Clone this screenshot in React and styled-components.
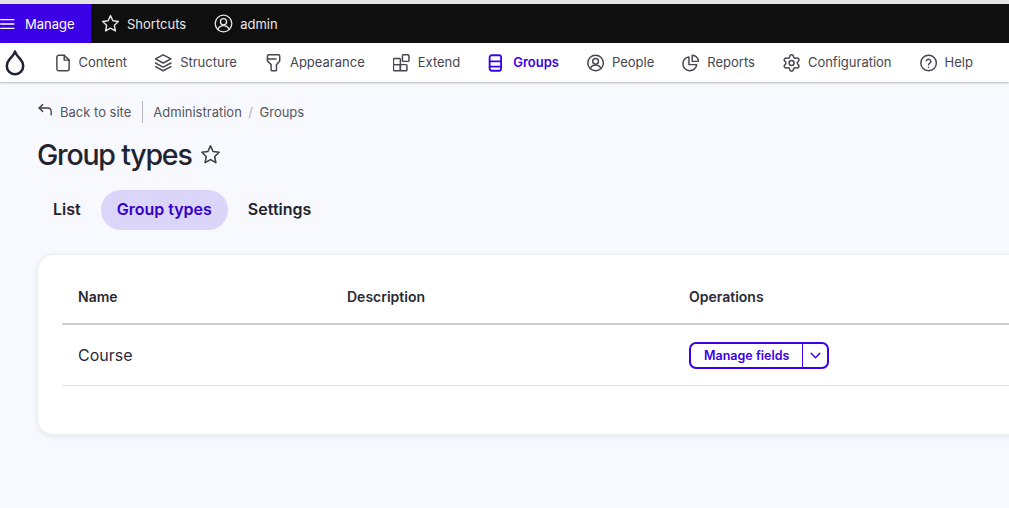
import React from 'react';
import styled, { createGlobalStyle } from 'styled-components';

const GlobalStyle = createGlobalStyle`
	html, body {
		margin: 0;
		height: 100%;
		overflow: hidden;
		background: #f8f9fe;
		font-family: Inter, "Liberation Sans", sans-serif;
		color: #222330;
	}
	#root {
		min-height: 100%;
	}
`;

const Icon = ({ size = 18, color = 'currentColor', width = 1.5, box = '0 0 24 24', children }) => (
	<svg
		width={size}
		height={size}
		viewBox={box}
		fill="none"
		stroke={color}
		strokeWidth={width}
		strokeLinecap="round"
		strokeLinejoin="round"
		style={{ flexShrink: 0 }}
	>
		{children}
	</svg>
);

const StarPath = () => (
	<path d="M12 3l2.7 5.9 6.3.8-4.600 4.400 1.200 6.400L12 17.400l-5.600 3.100 1.200-6.400L3 9.700l6.300-.8z" />
);

const navItems = [
	{
		label: 'Content',
		icon: (
			<>
				<path d="M5 5a2.500 2.500 0 0 1 2.500-2.500H14l6 6V19a2.500 2.500 0 0 1-2.500 2.500h-10A2.500 2.500 0 0 1 5 19z" />
				<path d="M14 2.500V8.500h6" />
			</>
		),
	},
	{
		label: 'Structure',
		icon: (
			<>
				<path d="M11.500 2l9.500 5-9.500 5L2 7z" />
				<path d="M2 12l9.500 5 9.500-5" />
				<path d="M2 16.500l9.500 5 9.500-5" />
			</>
		),
	},
	{
		label: 'Appearance',
		icon: (
			<>
				<path d="M4.500 3.500a1.500 1.500 0 0 1 1.500-1.500h12a1.500 1.500 0 0 1 1.500 1.500v6l-4 4.500v6.500a1 1 0 0 1-1 1h-4.500a1 1 0 0 1-1-1V14l-4.500-4.500z" />
				<path d="M4.500 7h10.500" />
			</>
		),
	},
	{
		label: 'Extend',
		icon: (
			<>
				<rect x="2" y="6.500" width="8.500" height="7.500" rx="1" />
				<rect x="2" y="14" width="8.500" height="7.500" rx="1" />
				<rect x="10.500" y="14" width="8" height="7.500" rx="1" />
				<rect x="13" y="2" width="8" height="8" rx="1" />
			</>
		),
	},
	{
		label: 'Groups',
		active: true,
		stroke: 2.2,
		icon: (
			<>
				<rect x="3.500" y="2.500" width="14" height="19" rx="2.500" />
				<path d="M3.500 10h14" />
				<path d="M3.500 16.500h14" />
			</>
		),
	},
	{
		label: 'People',
		icon: (
			<>
				<circle cx="12" cy="12" r="9.500" />
				<circle cx="12" cy="10" r="3.500" />
				<path d="M5.500 19c1.200-3 3.600-4.500 6.500-4.500s5.300 1.500 6.500 4.500" />
			</>
		),
	},
	{
		label: 'Reports',
		icon: (
			<>
				<path d="M10 4.500a8.500 8.500 0 1 0 9.500 9.500H10z" />
				<path d="M14 2.500a7.500 7.500 0 0 1 7.500 7.500H14z" />
			</>
		),
	},
	{
		label: 'Configuration',
		icon: (
			<>
				<circle cx="12" cy="12" r="3" />
				<path d="M9.671 4.136a2.34 2.34 0 0 1 4.659 0 2.34 2.34 0 0 0 3.319 1.915 2.34 2.34 0 0 1 2.33 4.033 2.34 2.34 0 0 0 0 3.831 2.34 2.34 0 0 1-2.33 4.033 2.34 2.34 0 0 0-3.319 1.915 2.34 2.34 0 0 1-4.659 0 2.34 2.34 0 0 0-3.32-1.915 2.34 2.34 0 0 1-2.33-4.033 2.34 2.34 0 0 0 0-3.831A2.34 2.34 0 0 1 6.35 6.051a2.34 2.34 0 0 0 3.32-1.915" />
			</>
		),
	},
	{
		label: 'Help',
		icon: (
			<>
				<circle cx="12" cy="12" r="9.500" />
				<path d="M9.200 9.300a2.900 2.900 0 0 1 5.600.8c0 1.900-2.800 2.400-2.800 4" />
				<path d="M12 17.200v.1" />
			</>
		),
	},
];

const App = () => (
	<>
		<GlobalStyle />
		<TopStrip />
		<Toolbar>
			<ManageTab>
				<Icon size={16} color="#fff" width={2}>
					<path d="M1 5.500h20M1 12h20M1 18.500h20" />
				</Icon>
				Manage
			</ManageTab>
			<DarkTab>
				<Icon size={21} width={1.6}>
					<StarPath />
				</Icon>
				Shortcuts
			</DarkTab>
			<DarkTab>
				<Icon size={21} width={1.5}>
					<circle cx="12" cy="12" r="9.500" />
					<circle cx="12" cy="10" r="3.500" />
					<path d="M5.500 19c1.200-3 3.600-4.500 6.500-4.500s5.300 1.500 6.500 4.500" />
				</Icon>
				admin
			</DarkTab>
		</Toolbar>
		<NavBar>
			<LogoSlot>
				<svg width="20" height="26" viewBox="0 0 20 26" fill="none">
					<path
						d="M10 1.500c1 3.500 3.300 5.500 5.300 7.700 1.800 2 2.900 4.200 2.900 6.800a8.200 8.200 0 0 1-16.400 0c0-2.600 1.100-4.800 2.900-6.800C6.700 7 9 5 10 1.500z"
						stroke="#1f2230"
						strokeWidth="2.500"
						strokeLinejoin="round"
					/>
				</svg>
			</LogoSlot>
			{navItems.map((item) => (
				<NavItem key={item.label} $active={item.active}>
					<Icon size={18} box="1.500 1 22 22" width={item.stroke || 1.8}>
						{item.icon}
					</Icon>
					<NavLabel>{item.label}</NavLabel>
				</NavItem>
			))}
		</NavBar>
		<Main>
			<Breadcrumbs>
				<BackLink>
					<BackIcon>
						<Icon size={17} width={1.9} color="#3c3d47">
							<path d="M8 3.500L3 8.500l5 5" />
							<path d="M3 8.500h12.500a4.500 4.500 0 0 1 4.500 4.500v5" />
						</Icon>
					</BackIcon>
					Back to site
				</BackLink>
				<Crumb>Administration</Crumb>
				<Slash>/</Slash>
				<Crumb>Groups</Crumb>
			</Breadcrumbs>
			<TitleRow>
				<Title>Group types</Title>
				<Icon size={23} color="#3c3d47" width={1.6}>
					<StarPath />
				</Icon>
			</TitleRow>
			<Tabs>
				<Tab>List</Tab>
				<Tab $active>Group types</Tab>
				<Tab>Settings</Tab>
			</Tabs>
			<Card>
				<Table>
					<thead>
						<tr>
							<Th $width={269}>Name</Th>
							<Th $width={342}>Description</Th>
							<Th>Operations</Th>
						</tr>
					</thead>
					<tbody>
						<tr>
							<Td>Course</Td>
							<Td />
							<Td>
								<DropButton>
									<DropLabel>Manage fields</DropLabel>
									<DropToggle>
										<Icon size={13} width={2.6}>
											<path d="M4 8l8 8 8-8" />
										</Icon>
									</DropToggle>
								</DropButton>
							</Td>
						</tr>
					</tbody>
				</Table>
			</Card>
		</Main>
	</>
);

export default App;

const TopStrip = styled.div`
	height: 4px;
	background: #e4e4e6;
`;

const Toolbar = styled.div`
	display: flex;
	height: 39px;
	background: #0f0f0f;
`;

const ManageTab = styled.div`
	display: flex;
	align-items: center;
	gap: 9px;
	width: 91px;
	box-sizing: border-box;
	background: #3b00e6;
	color: #fff;
	font-size: 13px;
`;

const DarkTab = styled.div`
	display: flex;
	align-items: center;
	gap: 6px;
	padding: 0 9px;
	margin-right: 9px;
	color: #e8e8ea;
	font-size: 13px;
`;

const NavBar = styled.nav`
	display: flex;
	align-items: center;
	height: 39px;
	background: #fff;
	box-shadow: 0 1px 2px rgba(60, 60, 70, 0.35);
`;

const LogoSlot = styled.div`
	display: flex;
	justify-content: center;
	width: 30px;
	margin-right: 9.500px;
`;

const NavItem = styled.div`
	display: flex;
	align-items: center;
	gap: 7px;
	padding: 0 14px;
	font-size: 13px;
	font-weight: ${(p) => (p.$active ? 600 : 400)};
	color: ${(p) => (p.$active ? '#3b00e6' : '#45464f')};
`;

const NavLabel = styled.span`
	margin-bottom: 2px;
`;

const Main = styled.main`
	padding: 19px 0 0 37px;
`;

const Breadcrumbs = styled.div`
	display: flex;
	align-items: center;
	height: 22px;
	font-size: 13px;
	color: #55565f;
`;

const BackLink = styled.div`
	display: flex;
	align-items: center;
	gap: 6px;
	height: 100%;
	padding-right: 11px;
	margin-right: 10px;
	border-right: 1px solid #b8b8bc;
`;

const BackIcon = styled.span`
	display: flex;
	margin-bottom: 3px;
`;

const Crumb = styled.span``;

const Slash = styled.span`
	margin: 0 6.500px;
	color: #b4b4ba;
`;

const TitleRow = styled.div`
	display: flex;
	align-items: center;
	gap: 7px;
	margin-top: 12px;
	height: 38px;
`;

const Title = styled.h1`
	margin: 0;
	font-size: 28.500px;
	font-weight: 500;
	letter-spacing: -1.200px;
	color: #222330;
`;

const Tabs = styled.div`
	display: flex;
	gap: 4px;
	margin-top: 17px;
`;

const Tab = styled.div`
	display: flex;
	align-items: center;
	height: 40px;
	box-sizing: border-box;
	padding: 0 16px 2px;
	border-radius: 20px;
	font-size: 16px;
	font-weight: 600;
	background: ${(p) => (p.$active ? '#dbd5fa' : 'transparent')};
	color: ${(p) => (p.$active ? '#3400c8' : '#222330')};
`;

const Card = styled.section`
	width: 1100px;
	height: 181px;
	box-sizing: border-box;
	margin-top: 24px;
	padding: 24px 0 0 24px;
	background: #fff;
	border: 1px solid #eceef3;
	border-radius: 16px;
	box-shadow: 0 2px 6px rgba(40, 40, 80, 0.08);
`;

const Table = styled.table`
	width: 100%;
	border-collapse: collapse;
	table-layout: fixed;
`;

const Th = styled.th`
	width: ${(p) => (p.$width ? `${p.$width}px` : 'auto')};
	height: 45px;
	padding: 0 16px 10px;
	box-sizing: border-box;
	text-align: left;
	font-size: 14px;
	font-weight: 600;
	color: #2a2b36;
	border-bottom: 2px solid #cfcfd2;
`;

const Td = styled.td`
	height: 60px;
	padding: 0 16px;
	font-size: 16px;
	color: #2a2b3c;
	border-bottom: 1px solid #e4e4e8;
`;

const DropButton = styled.div`
	display: inline-flex;
	align-items: stretch;
	height: 27px;
	box-sizing: border-box;
	border: 2px solid #3b00e6;
	border-radius: 7px;
	color: #3b00e6;
	background: #fff;
	font-size: 12.500px;
	font-weight: 600;
	vertical-align: middle;
`;

const DropLabel = styled.span`
	display: flex;
	align-items: center;
	padding: 0 13px;
`;

const DropToggle = styled.span`
	display: flex;
	align-items: center;
	justify-content: center;
	width: 24px;
	border-left: 1px solid #3b00e6;
`;
